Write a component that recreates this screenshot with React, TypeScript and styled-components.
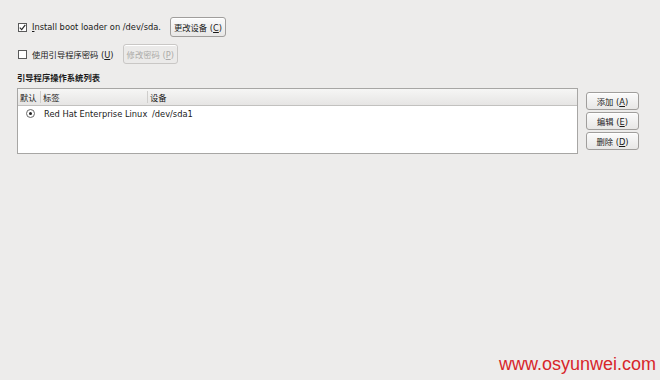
import styled, { createGlobalStyle } from "styled-components";

const GlobalStyle = createGlobalStyle`
  html, body {
    margin: 0;
    padding: 0;
    background-color: #edeceb;
  }
  body {
    font-family: "DejaVu Sans", "Noto Sans CJK SC", sans-serif;
    font-size: 8.3px;
    color: #1a1a1a;
  }
`;

const Page = styled.div`
  position: relative;
  display: flex;
  flex-direction: column;
  width: 660px;
  height: 380px;
  box-sizing: border-box;
  padding: 17px 21px 0 17px;
`;

const OptionRow = styled.div<{ gap: number }>`
  display: flex;
  align-items: center;
  height: 20px;
  margin-bottom: ${(props) => props.gap}px;
`;

const CheckLabel = styled.label`
  display: flex;
  align-items: center;
  gap: 5px;
  padding-left: 1px;
  margin-right: 9px;
`;

const Box = styled.span`
  display: inline-flex;
  align-items: center;
  justify-content: center;
  width: 7px;
  height: 7px;
  border: 1px solid #5a5a5a;
  background-color: #ffffff;
`;

const Key = styled.span`
  text-decoration: underline;
`;

const Button = styled.button<{ disabled?: boolean }>`
  height: 20px;
  padding: 0 3px;
  font-family: inherit;
  font-size: 8.3px;
  color: ${(props) => (props.disabled ? "#acaaa8" : "#1a1a1a")};
  border: 1px solid ${(props) => (props.disabled ? "#c9c7c5" : "#a09e9c")};
  border-radius: 3px;
  background: ${(props) =>
    props.disabled
      ? "#ebeae9"
      : "linear-gradient(#fbfbfb, #e8e7e6)"};
  box-shadow: inset 0 1px 0 #ffffff;
`;

const SectionTitle = styled.div`
  font-weight: bold;
  height: 12px;
  line-height: 12px;
  margin-bottom: 4px;
`;

const ListArea = styled.div`
  display: flex;
  gap: 8px;
`;

const Table = styled.div`
  flex: 1;
  height: 64px;
  border: 1px solid #a7a6a4;
  background-color: #ffffff;
`;

const HeaderRow = styled.div`
  display: grid;
  grid-template-columns: 23px 107px 1fr;
  height: 16px;
  background: linear-gradient(#f6f6f5, #e6e5e4);
  border-bottom: 1px solid #c2c1bf;
`;

const HeaderCell = styled.div<{ last?: boolean }>`
  display: flex;
  align-items: center;
  padding-left: 2px;
  border-right: ${(props) => (props.last ? "none" : "1px solid #cfcecc")};
  margin: 2px 0;
`;

const BodyRow = styled.div`
  display: grid;
  grid-template-columns: 23px 108px 1fr;
  height: 15px;
  align-items: center;
`;

const RadioCell = styled.div`
  display: flex;
  justify-content: center;
  padding-left: 1px;
`;

const Radio = styled.span`
  display: inline-flex;
  align-items: center;
  justify-content: center;
  width: 7px;
  height: 7px;
  border: 1px solid #6a6a6a;
  border-radius: 50%;
  background-color: #ffffff;
  &::after {
    content: "";
    width: 3px;
    height: 3px;
    border-radius: 50%;
    background-color: #222222;
  }
`;

const Cell = styled.div`
  padding-left: 3px;
  white-space: nowrap;
`;

const SideButtons = styled.div`
  display: flex;
  flex-direction: column;
  gap: 2px;
  width: 53px;
  padding-top: 4px;
`;

const SideButton = styled(Button)`
  height: 18px;
  width: 100%;
`;

const Watermark = styled.div`
  margin-top: auto;
  margin-right: -17px;
  padding-bottom: 5px;
  text-align: right;
  font-family: "Liberation Sans", Arial, sans-serif;
  font-size: 18px;
  color: #d8252a;
`;

function Check() {
  return (
    <svg width="7" height="7" viewBox="0 0 7 7">
      <path d="M0.8 3.6 L2.7 5.6 L6.3 0.9" fill="none" stroke="#2a2a2a" strokeWidth="1.2" />
    </svg>
  );
}

export default function App() {
  return (
    <>
      <GlobalStyle />
      <Page>
        <OptionRow gap={7}>
          <CheckLabel>
            <Box>
              <Check />
            </Box>
            <span>
              <Key>I</Key>nstall boot loader on /dev/sda.
            </span>
          </CheckLabel>
          <Button>
            更改设备 (<Key>C</Key>)
          </Button>
        </OptionRow>
        <OptionRow gap={8}>
          <CheckLabel>
            <Box />
            <span>
              使用引导程序密码 (<Key>U</Key>)
            </span>
          </CheckLabel>
          <Button disabled>
            修改密码 (<Key>P</Key>)
          </Button>
        </OptionRow>
        <SectionTitle>引导程序操作系统列表</SectionTitle>
        <ListArea>
          <Table>
            <HeaderRow>
              <HeaderCell>默认</HeaderCell>
              <HeaderCell>标签</HeaderCell>
              <HeaderCell last>设备</HeaderCell>
            </HeaderRow>
            <BodyRow>
              <RadioCell>
                <Radio />
              </RadioCell>
              <Cell>Red Hat Enterprise Linux</Cell>
              <Cell>/dev/sda1</Cell>
            </BodyRow>
          </Table>
          <SideButtons>
            <SideButton>
              添加 (<Key>A</Key>)
            </SideButton>
            <SideButton>
              编辑 (<Key>E</Key>)
            </SideButton>
            <SideButton>
              删除 (<Key>D</Key>)
            </SideButton>
          </SideButtons>
        </ListArea>
        <Watermark>www.osyunwei.com</Watermark>
      </Page>
    </>
  );
}
